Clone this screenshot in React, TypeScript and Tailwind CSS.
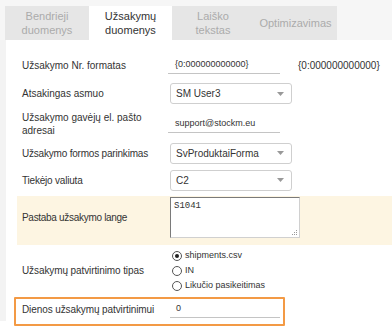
import React from 'react';

const tabs = [
  { label: ['Bendrieji', 'duomenys'], active: false },
  { label: ['Užsakymų', 'duomenys'], active: true },
  { label: ['Laiško', 'tekstas'], active: false },
  { label: ['Optimizavimas'], active: false },
];

function Select({ value }: { value: string }) {
  return (
    <div className="ml-[2px] w-[122px] h-[21px] flex items-center justify-between border border-[#cfcfcf] rounded-[3px] bg-white pl-[5px] pr-[7px]">
      <span className="text-[10px] text-[#333]">{value}</span>
      <svg width="7" height="4" viewBox="0 0 7 4">
        <path d="M0 0h7L3.5 4z" fill="#999" />
      </svg>
    </div>
  );
}

function LineInput({ value, className = '' }: { value: string; className?: string }) {
  return (
    <div className={`h-[18px] flex items-center border-b border-[#c4c4c4] ${className}`}>
      <span className="text-[9px] text-[#333]">{value}</span>
    </div>
  );
}

function Radio({ label, checked }: { label: string; checked?: boolean }) {
  return (
    <div className="h-[15px] flex items-center gap-[3px]">
      <span className="w-[10px] h-[10px] rounded-full border border-[#555] bg-white flex items-center justify-center">
        {checked && <span className="w-[4px] h-[4px] rounded-full bg-[#222]" />}
      </span>
      <span className="text-[9px] text-[#333]">{label}</span>
    </div>
  );
}

export default function App() {
  return (
    <div className="w-[392px] h-[335px] bg-white overflow-hidden text-[#333]" style={{ fontFamily: '"Liberation Sans", Arial, sans-serif' }}>
      {/* Tabs */}
      <div className="h-[40px] bg-[#f6f6f6] flex items-end pl-[5px]">
        {tabs.map((t, i) => (
          <div
            key={i}
            className={`h-[34px] flex flex-col items-center justify-center text-[11px] leading-[14px] ${
              i === 3 ? 'w-[83px]' : i === 2 ? 'w-[82px]' : i === 1 ? 'w-[83px]' : 'w-[84px]'
            } ${t.active ? 'bg-white text-[#333]' : 'bg-[#e6e6e6] text-[#ababab]'}`}
          >
            {t.label.map((l) => (
              <span key={l}>{l}</span>
            ))}
          </div>
        ))}
      </div>

      <div className="flex">
        <div className="w-[6px] h-[281px] shrink-0 bg-[#f3f3f3]" />
        <div className="flex-1 pt-[11px] text-[10px] whitespace-nowrap">
          {/* Row 1 */}
          <div className="ml-[11px] h-[28px] flex items-center">
            <div className="w-[151px] pl-[5px]">Užsakymo Nr. formatas</div>
            <LineInput value="{0:000000000000}" className="w-[112px] pl-[7px]" />
            <span className="ml-[18px] text-[10px]">{'{0:000000000000}'}</span>
          </div>

          {/* Row 2 */}
          <div className="ml-[11px] h-[29px] flex items-center">
            <div className="w-[151px] pl-[5px]">Atsakingas asmuo</div>
            <Select value="SM User3" />
          </div>

          {/* Row 3 */}
          <div className="ml-[11px] h-[32px] flex items-center">
            <div className="w-[151px] pl-[5px] leading-[13px]">
              Užsakymo gavėjų el. pašto
              <br />
              adresai
            </div>
            <LineInput value="support@stockm.eu" className="w-[112px] pl-[7px]" />
          </div>

          {/* Row 4 */}
          <div className="ml-[11px] h-[26px] flex items-center">
            <div className="w-[151px] pl-[5px] tracking-[-0.2px]">Užsakymo formos parinkimas</div>
            <Select value="SvProduktaiForma" />
          </div>

          {/* Row 5 */}
          <div className="ml-[11px] h-[28px] flex items-center">
            <div className="w-[151px] pl-[5px] tracking-[-0.2px]">Tiekėjo valiuta</div>
            <Select value="C2" />
          </div>

          {/* Row 6 - highlighted */}
          <div className="ml-[11px] mt-[2px] h-[49px] bg-[#fdf5e2] pt-[1px]">
            <div className="h-[41px] flex items-center">
              <div className="w-[151px] pl-[5px] tracking-[-0.3px]">Pastaba užsakymo lange</div>
              <div className="relative ml-[2px] w-[130px] h-[41px] bg-white border border-t-[#7a7a7a] border-l-[#7a7a7a] border-r-[#d0d0d0] border-b-[#d0d0d0] pl-[3px] pt-[3px]">
                <span className="text-[9px] leading-[11px] block" style={{ fontFamily: '"Liberation Mono", monospace' }}>
                  S1041
                </span>
                <svg className="absolute right-[2px] bottom-[2px]" width="5" height="5" viewBox="0 0 5 5">
                  <rect x="4" y="0" width="1" height="1" fill="#999" />
                  <rect x="2" y="2" width="1" height="1" fill="#999" />
                  <rect x="4" y="2" width="1" height="1" fill="#999" />
                  <rect x="0" y="4" width="1" height="1" fill="#999" />
                  <rect x="2" y="4" width="1" height="1" fill="#999" />
                  <rect x="4" y="4" width="1" height="1" fill="#999" />
                </svg>
              </div>
            </div>
          </div>

          {/* Row 7 - radios */}
          <div className="ml-[11px] h-[50px] flex items-center">
            <div className="w-[151px] pl-[5px] tracking-[-0.1px]">Užsakymų patvirtinimo tipas</div>
            <div className="ml-[4px] flex flex-col pt-[2px]">
              <Radio label="shipments.csv" checked />
              <Radio label="IN" />
              <Radio label="Likučio pasikeitimas" />
            </div>
          </div>

          {/* Row 8 - outlined */}
          <div className="ml-[8px] mt-[2px] w-[271px] h-[29px] border-2 border-[#f39a45] rounded-[1px]">
            <div className="h-[20px] flex items-center">
              <div className="w-[152px] pl-[6px] tracking-[-0.1px]">Dienos užsakymų patvirtinimui</div>
              <LineInput value="0" className="ml-[2px] w-[110px] h-[16px] pl-[6px]" />
            </div>
          </div>
        </div>
      </div>
    </div>
  );
}
